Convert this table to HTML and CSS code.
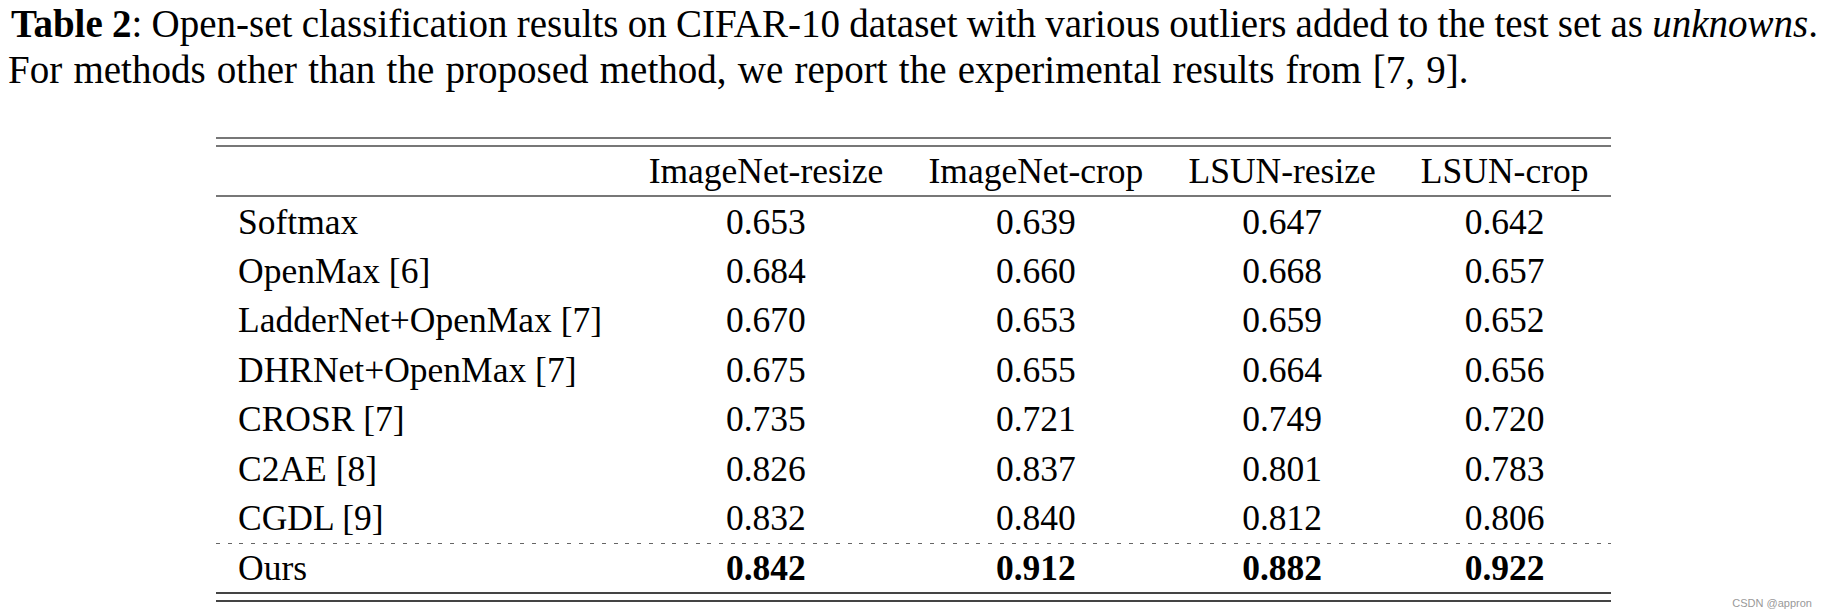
FILE: index.html
```html
<!DOCTYPE html>
<html>
<head>
<meta charset="utf-8">
<link rel="stylesheet" href="styles.css">
</head>
<body>
<div class="page">
  <p class="caption"><span class="line first"><b>Table 2</b>: Open-set classification results on CIFAR-10 dataset with various outliers added to the test set as <i>unknowns</i>.</span><span class="line second">For methods other than the proposed method, we report the experimental results from [7, 9].</span></p>
  <div class="rules">
    <table class="results">
      <thead>
        <tr><th class="method"></th><th>ImageNet-resize</th><th>ImageNet-crop</th><th>LSUN-resize</th><th>LSUN-crop</th></tr>
      </thead>
      <tbody>
        <tr><td class="method">Softmax</td><td>0.653</td><td>0.639</td><td>0.647</td><td>0.642</td></tr>
        <tr><td class="method">OpenMax [6]</td><td>0.684</td><td>0.660</td><td>0.668</td><td>0.657</td></tr>
        <tr><td class="method">LadderNet+OpenMax [7]</td><td>0.670</td><td>0.653</td><td>0.659</td><td>0.652</td></tr>
        <tr><td class="method">DHRNet+OpenMax [7]</td><td>0.675</td><td>0.655</td><td>0.664</td><td>0.656</td></tr>
        <tr><td class="method">CROSR [7]</td><td>0.735</td><td>0.721</td><td>0.749</td><td>0.720</td></tr>
        <tr><td class="method">C2AE [8]</td><td>0.826</td><td>0.837</td><td>0.801</td><td>0.783</td></tr>
        <tr><td class="method">CGDL [9]</td><td>0.832</td><td>0.840</td><td>0.812</td><td>0.806</td></tr>
        <tr class="dash"><td colspan="5"></td></tr>
        <tr class="ours"><td class="method">Ours</td><td><b>0.842</b></td><td><b>0.912</b></td><td><b>0.882</b></td><td><b>0.922</b></td></tr>
      </tbody>
    </table>
  </div>
  <div class="watermark">CSDN @appron</div>
</div>
</body>
</html>
```

FILE: styles.css
```css
html, body {
  margin: 0;
  padding: 0;
  background: #ffffff;
}
.page {
  position: relative;
  width: 1827px;
  height: 615px;
  overflow: hidden;
  font-family: "Liberation Serif", "Times New Roman", serif;
  color: #000;
}
.caption {
  margin: 0;
  padding: 1px 9px 0 8px;
  font-size: 39px;
  line-height: 46px;
}
.caption .line {
  display: block;
  white-space: nowrap;
}
.caption .first {
  padding-left: 3px;
  word-spacing: -0.5px;
}
.caption .second {
  word-spacing: 1.5px;
}
.caption b {
  font-weight: bold;
}
.rules {
  width: 1395px;
  margin: 44px auto 0;
  border-top: 2px solid #777;
  border-bottom: 2px solid #444;
  padding: 6px 0;
}
.results {
  width: 100%;
  border-collapse: collapse;
  font-size: 35.5px;
  border-top: 2px solid #777;
  border-bottom: 2px solid #444;
}
.results th,
.results td {
  padding: 0 22px;
  text-align: center;
  font-weight: normal;
  white-space: nowrap;
  height: 49.4px;
  line-height: 40px;
}
.results thead th {
  height: 48px;
  border-bottom: 2px solid #777;
}
.results .method {
  text-align: left;
}
.results tr.dash td {
  height: 1px;
  padding: 0;
  line-height: 0;
  background: repeating-linear-gradient(to right, #666 0 4px, transparent 4px 11.7px);
}
.results tr.ours td {
  height: 48px;
}
.results b {
  font-weight: bold;
}
.watermark {
  position: absolute;
  right: 15px;
  bottom: 6px;
  font-family: "Liberation Sans", Arial, sans-serif;
  font-size: 11px;
  color: #999;
}
```
